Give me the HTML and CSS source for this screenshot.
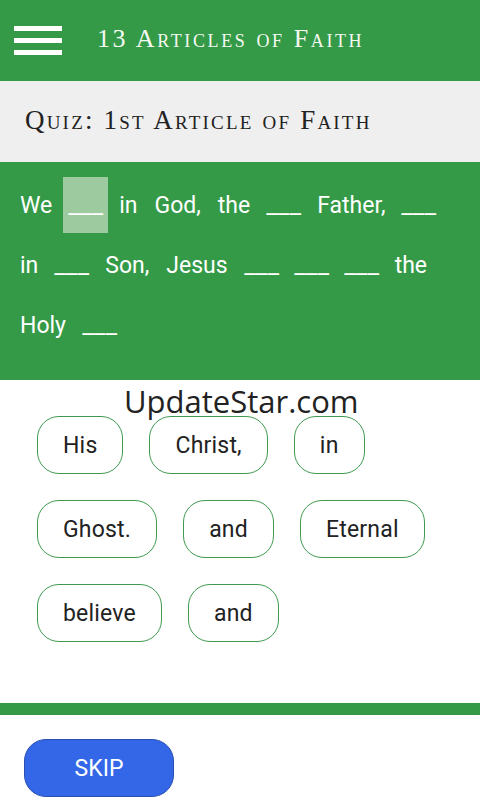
FILE: index.html
```html
<!DOCTYPE html>
<html lang="en">
<head>
    <meta charset="UTF-8">
    <meta name="viewport" content="width=device-width, initial-scale=1.0">
    <title>13 Articles of Faith</title>
    <link rel="stylesheet" href="styles.css">
</head>
<body>
    <div class="page">
        <header class="appbar">
            <button class="menu-btn" aria-label="Menu">
                <span></span><span></span><span></span>
            </button>
            <div class="app-title">13 Articles of Faith</div>
        </header>

        <div class="quiz-title">Quiz: 1st Article of Faith</div>

        <div class="verse">
            <span class="token">We</span>
            <span class="token blank active"><span class="line">___</span></span>
            <span class="token">in</span>
            <span class="token">God,</span>
            <span class="token">the</span>
            <span class="token blank"><span class="line">___</span></span>
            <span class="token">Father,</span>
            <span class="token blank"><span class="line">___</span></span>
            <span class="token">in</span>
            <span class="token blank"><span class="line">___</span></span>
            <span class="token">Son,</span>
            <span class="token">Jesus</span>
            <span class="token blank"><span class="line">___</span></span>
            <span class="token blank"><span class="line">___</span></span>
            <span class="token blank"><span class="line">___</span></span>
            <span class="token">the</span>
            <span class="token">Holy</span>
            <span class="token blank"><span class="line">___</span></span>
        </div>

        <div class="choices">
            <button class="chip">His</button>
            <button class="chip">Christ,</button>
            <button class="chip">in</button>
            <button class="chip">Ghost.</button>
            <button class="chip">and</button>
            <button class="chip">Eternal</button>
            <button class="chip">believe</button>
            <button class="chip">and</button>
        </div>

        <div class="divider"></div>

        <div class="footer">
            <button class="skip-btn">Skip</button>
        </div>

        <div class="watermark">UpdateStar.com</div>
    </div>
</body>
</html>
```

FILE: styles.css
```css
body {
    margin: 0;
    font-family: Roboto, "Liberation Sans", sans-serif;
    background-color: #fff;
}
.page {
    position: relative;
    display: flex;
    flex-direction: column;
    min-height: 800px;
}
button {
    font-family: inherit;
    cursor: pointer;
}

/* top bar */
.appbar {
    display: flex;
    align-items: center;
    height: 81px;
    background-color: #349a47;
}
.menu-btn {
    display: flex;
    flex-direction: column;
    gap: 7px;
    margin-left: 14px;
    padding: 0;
    border: none;
    background: none;
}
.menu-btn span {
    display: block;
    width: 48px;
    height: 5px;
    background-color: #fff;
}
.app-title {
    margin-left: 35px;
    margin-top: -3px;
    font-family: "Liberation Serif", serif;
    font-variant: small-caps;
    font-size: 26px;
    letter-spacing: 2.6px;
    color: #f6f8f2;
}

.quiz-title {
    display: flex;
    align-items: center;
    height: 81px;
    padding-left: 25px;
    padding-bottom: 3px;
    box-sizing: border-box;
    background-color: #efefef;
    font-family: "Liberation Serif", serif;
    font-variant: small-caps;
    font-size: 27px;
    letter-spacing: 2.2px;
    color: #222;
}

/* verse with blanks */
.verse {
    display: flex;
    flex-wrap: wrap;
    row-gap: 4px;
    padding: 15px 14px 27px;
    background-color: #349a47;
}
.token {
    height: 56px;
    line-height: 58px;
    padding: 0 6px;
    margin-right: 5px;
    font-size: 23px;
    color: #fff;
}
.token.blank {
    width: 33px;
    text-align: center;
}
.token.blank .line {
    display: inline-block;
    transform: scaleX(1.12);
}
.token.active {
    background-color: #9dcb9f;
}

/* answer chips */
.choices {
    flex: 1;
    display: flex;
    flex-wrap: wrap;
    align-content: flex-start;
    gap: 26px 26px;
    padding: 36px 37px;
}
.chip {
    height: 58px;
    padding: 0 25px;
    border: 1px solid #3f9a50;
    border-radius: 22px;
    background-color: #fff;
    font-size: 23px;
    letter-spacing: 0.2px;
    color: #222;
}

.divider {
    height: 12px;
    background-color: #349a47;
}
.footer {
    padding: 24px 24px 3px;
}
.skip-btn {
    width: 150px;
    height: 58px;
    border: 1px solid #2a4fae;
    border-radius: 22px;
    background-color: #3467e8;
    font-size: 23px;
    text-transform: uppercase;
    color: #fff;
}

.watermark {
    position: absolute;
    top: 380px;
    left: 124px;
    font-family: "Open Sans", sans-serif;
    font-size: 31px;
    color: #222;
}
```
